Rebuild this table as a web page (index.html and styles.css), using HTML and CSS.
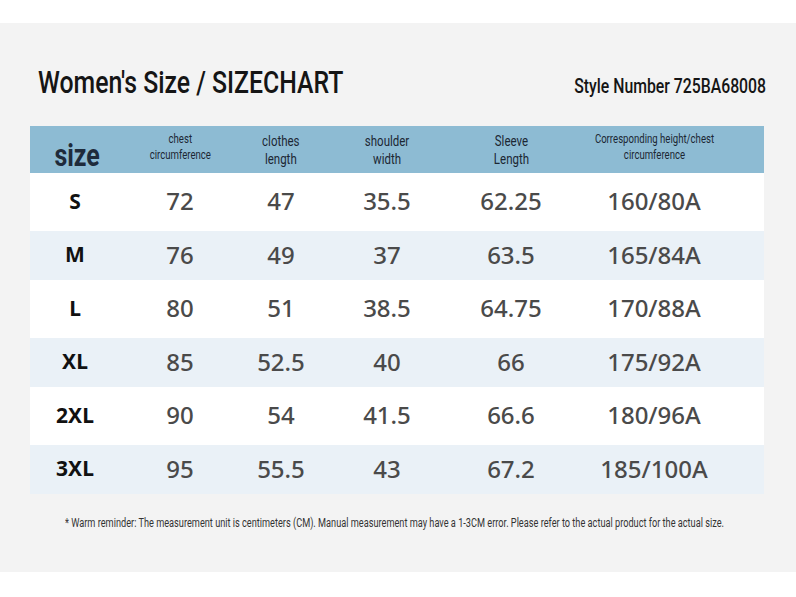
FILE: index.html
```html
<!DOCTYPE html>
<html>
<head>
<meta charset="utf-8">
<link rel="stylesheet" href="styles.css">
</head>
<body>
<div class="panel">
  <div class="titlebar">
    <h1 class="title">Women's Size / SIZECHART</h1>
    <div class="style-no">Style Number 725BA68008</div>
  </div>
  <div class="table">
    <div class="row head">
      <div class="cell"><span class="size-h">size</span></div>
      <div class="cell"><span class="sm">chest<br>circumference</span></div>
      <div class="cell"><span class="md">clothes<br>length</span></div>
      <div class="cell"><span class="md">shoulder<br>width</span></div>
      <div class="cell"><span class="md">Sleeve<br>Length</span></div>
      <div class="cell"><span class="sm">Corresponding height/chest<br>circumference</span></div>
      <div class="cell"></div>
    </div>
    <div class="row white">
      <div class="cell sz">S</div><div class="cell num">72</div><div class="cell num">47</div><div class="cell num">35.5</div><div class="cell num">62.25</div><div class="cell num">160/80A</div><div class="cell"></div>
    </div>
    <div class="row blue">
      <div class="cell sz">M</div><div class="cell num">76</div><div class="cell num">49</div><div class="cell num">37</div><div class="cell num">63.5</div><div class="cell num">165/84A</div><div class="cell"></div>
    </div>
    <div class="row white">
      <div class="cell sz">L</div><div class="cell num">80</div><div class="cell num">51</div><div class="cell num">38.5</div><div class="cell num">64.75</div><div class="cell num">170/88A</div><div class="cell"></div>
    </div>
    <div class="row blue">
      <div class="cell sz">XL</div><div class="cell num">85</div><div class="cell num">52.5</div><div class="cell num">40</div><div class="cell num">66</div><div class="cell num">175/92A</div><div class="cell"></div>
    </div>
    <div class="row white">
      <div class="cell sz">2XL</div><div class="cell num">90</div><div class="cell num">54</div><div class="cell num">41.5</div><div class="cell num">66.6</div><div class="cell num">180/96A</div><div class="cell"></div>
    </div>
    <div class="row blue">
      <div class="cell sz">3XL</div><div class="cell num">95</div><div class="cell num">55.5</div><div class="cell num">43</div><div class="cell num">67.2</div><div class="cell num">185/100A</div><div class="cell"></div>
    </div>
  </div>
  <p class="note">* Warm reminder: The measurement unit is centimeters (CM). Manual measurement may have a 1-3CM error. Please refer to the actual product for the actual size.</p>
</div>
</body>
</html>
```

FILE: styles.css
```css
html, body {
  margin: 0;
  padding: 0;
  background: #ffffff;
}
body {
  width: 796px;
  height: 597px;
  padding-top: 23px;
  box-sizing: border-box;
}
.panel {
  background: #f3f3f3;
  height: 549px;
  width: 796px;
  padding: 0 32px 0 30px;
  box-sizing: border-box;
}
.titlebar {
  display: flex;
  justify-content: space-between;
  align-items: flex-end;
  height: 103px;
  padding: 0 0 0 8px;
  box-sizing: border-box;
  font-family: Roboto, "Liberation Sans", sans-serif;
  color: #151515;
}
.title {
  margin: 0 0 26px 0;
  font-size: 32px;
  line-height: 36px;
  font-weight: 500;
  white-space: nowrap;
  transform: scaleX(0.775);
  transform-origin: bottom left;
}
.style-no {
  margin: 0 -2px 28px 0;
  font-size: 21px;
  line-height: 24px;
  font-weight: 500;
  white-space: nowrap;
  transform: scaleX(0.752);
  transform-origin: bottom right;
}
.table {
  width: 734px;
}
.row {
  display: grid;
  grid-template-columns: 90px 120px 82px 130px 118px 168px 1fr;
  align-items: center;
}
.head {
  background: #8dbbd3;
  height: 47px;
  font-family: Roboto, "Liberation Sans", sans-serif;
  color: #1c2733;
}
.white { background: #ffffff; height: 58px; }
.blue { background: #eaf1f7; height: 49px; }
.cell {
  text-align: center;
}
.head span {
  display: inline-block;
  white-space: nowrap;
  transform-origin: center;
}
.size-h {
  font-size: 32px;
  font-weight: bold;
  color: #1e2b3b;
  margin-top: 10px;
  margin-left: 4px;
  transform: scaleX(0.78);
}
.sm {
  font-size: 12px;
  line-height: 16px;
  margin-top: -6px;
  transform: scaleX(0.8);
}
.md {
  font-size: 14px;
  line-height: 18px;
  transform: scaleX(0.82);
}
.sz {
  font-family: "Noto Sans", "DejaVu Sans", sans-serif;
  font-weight: bold;
  font-size: 21px;
  color: #111;
  padding-bottom: 3px;
}
.num {
  font-family: "Noto Sans", "DejaVu Sans", sans-serif;
  font-weight: 500;
  font-size: 24px;
  color: #4a4a4a;
  padding-bottom: 3px;
}
.note {
  margin: 22px 0 0 35px;
  font-family: Roboto, "Liberation Sans", sans-serif;
  font-size: 12px;
  color: #333;
  white-space: nowrap;
  transform: scaleX(0.766);
  transform-origin: left center;
}
```
